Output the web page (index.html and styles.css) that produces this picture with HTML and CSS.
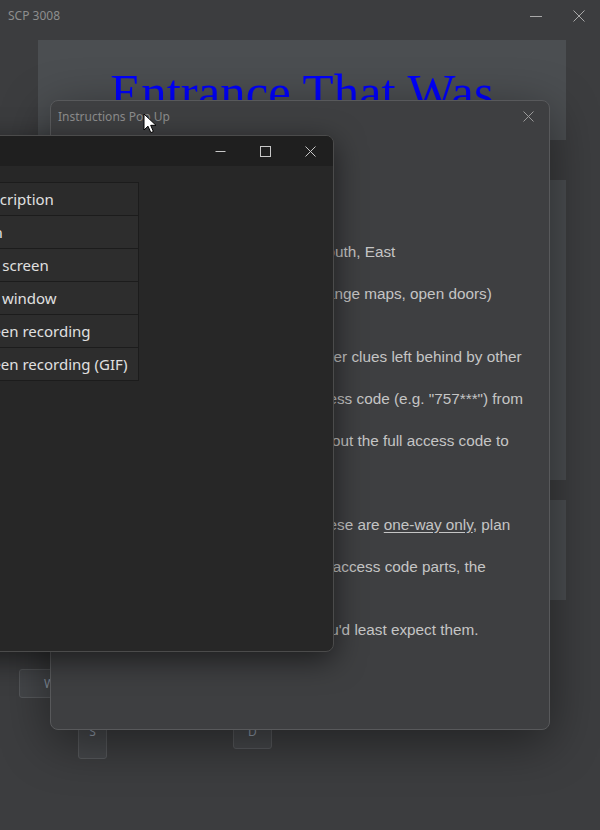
FILE: index.html
```html
<!DOCTYPE html>
<html lang="en">
<head>
<meta charset="utf-8">
<title>SCP 3008</title>
<link rel="stylesheet" href="styles.css">
</head>
<body>
<div class="app">
  <header class="titlebar">
    <span class="app-title">SCP 3008</span>
    <div class="controls">
      <span class="ctl"><svg width="12" height="12" viewBox="0 0 12 12"><path d="M0 6.5H12" stroke="#a9a9a9" stroke-width="1"/></svg></span>
      <span class="ctl"><svg width="12" height="12" viewBox="0 0 12 12"><path d="M0.5 0.5L11.5 11.5M11.5 0.5L0.5 11.5" stroke="#a9a9a9" stroke-width="1"/></svg></span>
    </div>
  </header>

  <main class="page">
    <section class="hero"><h1>Entrance That Was</h1></section>
    <section class="card card-tall"></section>
    <section class="card card-short"></section>
  </main>

  <div class="keys">
    <button class="key key-w">W</button>
    <div class="key-row">
      <button class="key key-s">S</button>
      <button class="key key-d">D</button>
    </div>
  </div>

  <div class="popup">
    <div class="popup-bar">
      <span class="popup-title">Instructions Pop Up</span>
      <span class="popup-close"><svg width="11" height="11" viewBox="0 0 11 11"><path d="M0.5 0.5L10.5 10.5M10.5 0.5L0.5 10.5" stroke="#9a9a9a" stroke-width="1"/></svg></span>
    </div>
    <div class="popup-body">
      <p>Use W, A, S, D to walk North, West, South, East<br>Push E to interact (pick up objects, change maps, open doors)</p>
      <p>Explore the aisles to find notes and other clues left behind by other<br>survivors. Notes record part of the access code (e.g. "757***") from<br>the notes you find. Use these to figure out the full access code to<br>escape the store.<br>Some doors lead to new rooms, but these are <u>one-way only</u>, plan<br>ahead. Once you have found all of the access code parts, the</p>
      <p>hidden exit doors will appear where you'd least expect them.</p>
    </div>
  </div>

  <div class="hk-window">
    <div class="hk-bar">
      <span class="hk-ctl"><svg width="11" height="11" viewBox="0 0 11 11"><path d="M0.5 5.5H10.5" stroke="#c8c8c8" stroke-width="1"/></svg></span>
      <span class="hk-ctl"><svg width="11" height="11" viewBox="0 0 11 11"><rect x="0.5" y="0.5" width="10" height="10" fill="none" stroke="#c8c8c8" stroke-width="1"/></svg></span>
      <span class="hk-ctl"><svg width="11" height="11" viewBox="0 0 11 11"><path d="M0.5 0.5L10.5 10.5M10.5 0.5L0.5 10.5" stroke="#c8c8c8" stroke-width="1"/></svg></span>
    </div>
    <div class="hk-body">
      <table class="hk-table">
        <colgroup><col class="col-key"><col class="col-desc"></colgroup>
        <thead><tr><th>Hotkey</th><th>Description</th></tr></thead>
        <tbody>
          <tr><td>Ctrl + Print Screen</td><td>Capture region</td></tr>
          <tr><td>Print Screen</td><td>Capture entire screen</td></tr>
          <tr><td>Alt + Print Screen</td><td>Capture active window</td></tr>
          <tr><td>Shift + Print Screen</td><td>Start/Stop screen recording</td></tr>
          <tr><td>Ctrl + Shift + Print Screen</td><td>Start/Stop screen recording (GIF)</td></tr>
        </tbody>
      </table>
    </div>
  </div>

  <svg class="cursor" width="14" height="21" viewBox="0 0 14 21"><path d="M1 1V17L5 13.2L7.8 19.6L10.4 18.5L7.7 12.3H13Z" fill="#fff" stroke="#000" stroke-width="1" stroke-linejoin="round"/></svg>
</div>
</body>
</html>
```

FILE: styles.css
```css
* { box-sizing: border-box; }

body {
  margin: 0;
  background: #3c3d3f;
  font-family: "Liberation Sans", Arial, sans-serif;
}

.app {
  position: relative;
  width: 600px;
  height: 830px;
  overflow: hidden;
  background: #3c3d3f;
}

/* outer window title bar */
.titlebar {
  height: 40px;
  display: flex;
  align-items: flex-start;
  padding-left: 8px;
}
.app-title {
  font: 12px/31px "Noto Sans", "Liberation Sans", sans-serif;
  color: #8e8e8e;
}
.controls { margin-left: auto; display: flex; }
.ctl {
  width: 43px;
  height: 31px;
  display: flex;
  align-items: center;
  justify-content: center;
}

/* page behind the popup */
.page {
  margin-left: 38px;
  width: 528px;
  display: flex;
  flex-direction: column;
}
.hero {
  height: 100px;
  background: #4b4e51;
  padding-top: 22px;
}
.hero h1 {
  margin: 0;
  text-align: center;
  font: 400 50.8px/1.2 "Liberation Serif", "Times New Roman", serif;
  color: #0000ff;
  white-space: nowrap;
}
.card { background: #4a4d50; }
.card-tall { margin-top: 40px; height: 300px; }
.card-short { margin-top: 20px; height: 100px; }

/* movement keys */
.keys { padding-left: 19px; margin-top: 69px; }
.key {
  display: block;
  background: #45474a;
  border: 1px solid #56585b;
  border-radius: 3px;
  color: #8f9aa8;
  font: 12px "Noto Sans", sans-serif;
  padding: 0;
}
.key-w { width: 61px; height: 29px; }
.key-row { display: flex; margin-top: 21px; }
.key-s { margin-left: 59px; width: 29px; height: 40px; line-height: 24px; align-self: flex-start; display: flex; justify-content: center; }
.key-d { margin-left: 126px; width: 39px; height: 30px; line-height: 24px; display: flex; justify-content: center; }

/* instructions popup */
.popup {
  position: absolute;
  left: 50px;
  top: 100px;
  width: 500px;
  height: 630px;
  background: #3e3f41;
  border: 1px solid #58595b;
  border-radius: 8px;
  box-shadow: 0 12px 50px rgba(0, 0, 0, 0.45);
}
.popup-bar {
  height: 30px;
  display: flex;
  align-items: center;
  justify-content: space-between;
  padding-left: 7px;
}
.popup-title {
  font: 12px "Noto Sans", "Liberation Sans", sans-serif;
  color: #8c8c8c;
}
.popup-close {
  width: 42px;
  height: 30px;
  display: flex;
  align-items: center;
  justify-content: center;
}
.popup-body {
  padding: 100px 0 0 19px;
  font-size: 15.3px;
  line-height: 42px;
  color: #c5c5c5;
}
.popup-body p { margin: 0; white-space: nowrap; }
.popup-body p + p { margin-top: 21px; }
.popup-body u { text-underline-offset: 2px; }

/* hotkey settings window */
.hk-window {
  position: absolute;
  left: -300px;
  top: 135px;
  width: 634px;
  height: 517px;
  background: #272727;
  border: 1px solid #4b4b4b;
  border-radius: 8px;
  overflow: hidden;
  box-shadow: 0 8px 30px rgba(0, 0, 0, 0.55);
}
.hk-bar {
  height: 30px;
  background: #1f1f1f;
  display: flex;
  justify-content: flex-end;
}
.hk-ctl {
  width: 45px;
  height: 30px;
  display: flex;
  align-items: center;
  justify-content: center;
}
.hk-body { padding-top: 16px; }
.hk-table {
  margin-left: 27px;
  width: 410px;
  table-layout: fixed;
  border-collapse: collapse;
  font: 15px "Noto Sans", "Liberation Sans", sans-serif;
  color: #e0e0e0;
}
.col-key { width: 160px; }
.col-desc { width: 250px; }
.hk-table tr { height: 33px; }
.hk-table th,
.hk-table td {
  border: 1px solid #1c1c1c;
  padding: 0 8px;
  white-space: nowrap;
  overflow: hidden;
  font-weight: 400;
}
.hk-table th { background: #2b2b2b; }
.hk-table td { background: #2d2d2d; text-align: left; }

.cursor {
  position: absolute;
  left: 143px;
  top: 113px;
}
```
